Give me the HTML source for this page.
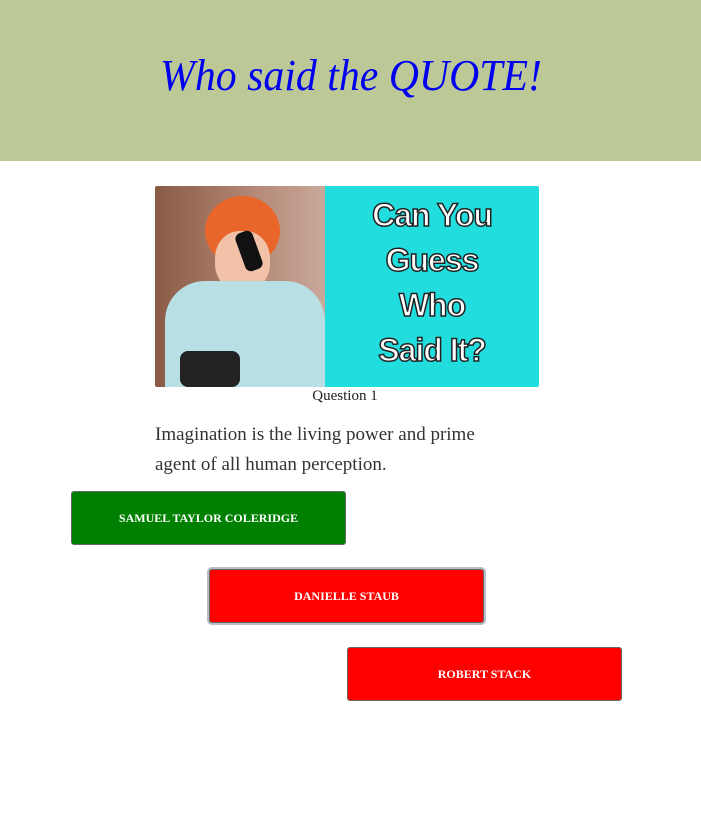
<!DOCTYPE html>
<html><head><style>
body{margin:0;width:701px;height:831px;background:#fff;font-family:"Liberation Serif",serif;position:relative;overflow:hidden}
.hdr{position:absolute;left:0;top:0;width:701px;height:161px;background:#bcc996}
.hdr h1{margin:0;position:absolute;top:50px;left:150px;width:400px;white-space:nowrap;text-align:center;font-style:italic;font-weight:normal;color:#0000ee;font-size:44px;transform:scaleX(0.95);transform-origin:center}
.img{position:absolute;left:155px;top:186px;width:384px;height:201px;border-radius:2px;overflow:hidden}
.ph{position:absolute;left:0;top:0;width:170px;height:201px;background:linear-gradient(90deg,#8a5a45,#b58a78 60%,#c9a89a)}
.cy{position:absolute;left:170px;top:0;width:214px;height:201px;background:#22dddd;text-align:center;font-family:"Liberation Sans",sans-serif;font-weight:bold;color:#fff;font-size:32px;line-height:45px;padding-top:7px;box-sizing:border-box;-webkit-text-stroke:1.5px #222;letter-spacing:-1px}
.q{position:absolute;top:388px;left:0;width:690px;text-align:center;font-size:15px;color:#222}
.t{position:absolute;left:155px;top:420px;width:365px;font-size:19px;line-height:30px;color:#333}
.b{position:absolute;width:275px;height:54px;border-radius:3px;border:1px solid #666;box-sizing:border-box;color:#fff;font-size:12px;font-weight:bold;display:flex;align-items:center;justify-content:center}
</style></head><body>
<div class="hdr"><h1>Who said the QUOTE!</h1></div>
<div class="img">
<div class="ph">
<div style="position:absolute;left:50px;top:10px;width:75px;height:70px;border-radius:50%;background:#e8662a"></div>
<div style="position:absolute;left:60px;top:45px;width:55px;height:60px;border-radius:45%;background:#f2c2a8"></div>
<div style="position:absolute;left:10px;top:95px;width:160px;height:106px;border-radius:40px 40px 0 0;background:#b8e0e4"></div>
<div style="position:absolute;left:25px;top:165px;width:60px;height:36px;background:#222;border-radius:8px"></div>
<div style="position:absolute;left:85px;top:45px;width:18px;height:40px;background:#111;border-radius:6px;transform:rotate(-20deg)"></div>
</div>
<div class="cy">Can You<br>Guess<br>Who<br>Said It?</div>
</div>
<div class="q">Question 1</div>
<div class="t">Imagination is the living power and prime agent of all human perception.</div>
<div class="b" style="left:71px;top:491px;background:#008000">SAMUEL TAYLOR COLERIDGE</div>
<div class="b" style="left:209px;top:569px;background:#f00;border:1px solid #666;box-shadow:0 0 0 2px #b8bec6">DANIELLE STAUB</div>
<div class="b" style="left:347px;top:647px;background:#f00">ROBERT STACK</div>
</body></html>
